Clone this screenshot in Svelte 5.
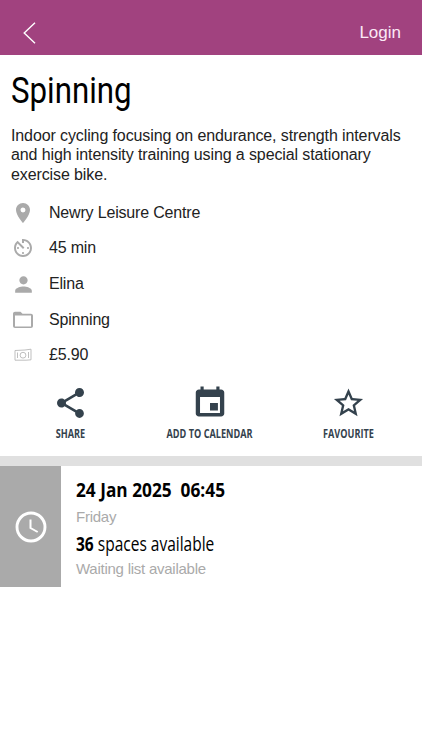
<header class="topbar">
    <button class="back" aria-label="Back">
        <svg width="13" height="22" viewBox="0 0 13 22"><path d="M12 0.7 1.2 11 12 21.3" fill="none" stroke="#fff" stroke-width="1.4" /></svg>
    </button>
    <button class="login">Login</button>
</header>

<main>
    <section class="info">
        <h1><span>{activity.name}</span></h1>
        <p class="description">{activity.description}</p>
        <ul class="details">
            {#each details as detail}
                <li>
                    <span class="icon">
                        {#if detail.icon === 'place'}
                            <svg width="24" height="24" viewBox="0 0 24 24"><path d="M12 2C8.13 2 5 5.13 5 9c0 5.25 7 13 7 13s7-7.75 7-13c0-3.87-3.13-7-7-7zm0 9.5a2.5 2.5 0 0 1 0-5 2.5 2.5 0 0 1 0 5z" /></svg>
                        {:else if detail.icon === 'timer'}
                            <svg width="24" height="24" viewBox="0 0 24 24"><path d="M11 17c0 .55.45 1 1 1s1-.45 1-1-.45-1-1-1-1 .45-1 1zm0-14v4h2V5.080c3.390.49 6 3.390 6 6.920 0 3.870-3.130 7-7 7s-7-3.130-7-7c0-1.680.59-3.220 1.580-4.420L12 13l1.410-1.410-6.800-6.800v.02C4.420 6.450 3 9.050 3 12c0 4.970 4.020 9 9 9 4.970 0 9-4.030 9-9s-4.030-9-9-9h-1zm7 9c0-.55-.45-1-1-1s-1 .45-1 1 .45 1 1 1 1-.45 1-1zM6 12c0 .55.45 1 1 1s1-.45 1-1-.45-1-1-1-1 .45-1 1z" /></svg>
                        {:else if detail.icon === 'person'}
                            <svg width="25" height="25" viewBox="0 0 24 24"><path d="M12 12c2.210 0 4-1.790 4-4s-1.790-4-4-4-4 1.790-4 4 1.790 4 4 4zm0 2c-2.670 0-8 1.340-8 4v2h16v-2c0-2.660-5.330-4-8-4z" /></svg>
                        {:else if detail.icon === 'folder'}
                            <svg width="24" height="24" viewBox="0 0 24 24"><path d="M9.500 3.800H4c-1.100 0-1.990.9-1.990 2L2 18c0 1.100.9 2 2 2h16c1.100 0 2-.9 2-2V7.700c0-1.100-.9-2-2-2h-8.500zM20 18.400H4V7.400h16z" /></svg>
                        {:else}
                            <svg width="18" height="14" viewBox="0 0 18 14" class="money">
                                <path d="M1 2.500 11 2 17 1.200V11.800L12 12.200 1 12.200zM3.500 4.500v5.500M14.500 4v6" />
                                <circle cx="9" cy="7.200" r="2.900" />
                            </svg>
                        {/if}
                    </span>
                    <span>{detail.text}</span>
                </li>
            {/each}
        </ul>
        <div class="actions">
            <button>
                <svg width="37" height="37" viewBox="0 0 24 24"><path d="M18 16.080c-.76 0-1.440.3-1.960.77L8.910 12.700c.05-.23.09-.46.09-.7s-.04-.47-.09-.7l7.050-4.110c.54.5 1.250.81 2.040.81 1.660 0 3-1.340 3-3s-1.340-3-3-3-3 1.340-3 3c0 .24.04.47.09.7L8.040 9.810C7.500 9.310 6.790 9 6 9c-1.660 0-3 1.340-3 3s1.340 3 3 3c.79 0 1.500-.31 2.040-.81l7.120 4.160c-.05.21-.08.43-.08.65 0 1.610 1.310 2.920 2.920 2.920s2.920-1.310 2.920-2.920-1.310-2.920-2.920-2.920z" /></svg>
                <span>SHARE</span>
            </button>
            <button>
                <svg width="38" height="36" viewBox="0 0 24 24" preserveAspectRatio="none"><path d="M17 12h-5v5h5v-5zM16 1v2H8V1H6v2H5c-1.110 0-1.990.9-1.990 2L3 19c0 1.100.89 2 2 2h14c1.100 0 2-.9 2-2V5c0-1.100-.9-2-2-2h-1V1h-2zm2.300 17.700H5.700V8h12.600z" /></svg>
                <span>ADD TO CALENDAR</span>
            </button>
            <button>
                <svg width="35" height="35" viewBox="0 0 24 24"><path d="m22 9.240-7.190-.62L12 2 9.190 8.630 2 9.240l5.460 4.730L5.820 21 12 17.270 18.180 21l-1.630-7.030L22 9.240zM12 15.400l-3.760 2.270 1-4.280-3.320-2.880 4.380-.38L12 6.100l1.710 4.040 4.380.38-3.320 2.880 1 4.280L12 15.400z" /></svg>
                <span>FAVOURITE</span>
            </button>
        </div>
    </section>

    <section class="session">
        <div class="clock">
            <svg width="32" height="32" viewBox="0 0 32 32" fill="none" stroke="#fff"><circle cx="16" cy="16" r="14" stroke-width="2.900" /><path d="M15.500 8.500v8.500l7.200 4" stroke-width="2" /></svg>
        </div>
        <div class="times">
            <div class="date"><span>{session.date}&nbsp; {session.time}</span></div>
            <div class="muted day">{session.day}</div>
            <div class="spaces"><span><b>{session.spaces}</b> spaces available</span></div>
            <div class="muted">Waiting list available</div>
        </div>
    </section>
</main>

<script>
    const activity = {
        name: 'Spinning',
        description: 'Indoor cycling focusing on endurance, strength intervals and high intensity training using a special stationary exercise bike.'
    };

    const details = [
        { icon: 'place', text: 'Newry Leisure Centre' },
        { icon: 'timer', text: '45 min' },
        { icon: 'person', text: 'Elina' },
        { icon: 'folder', text: 'Spinning' },
        { icon: 'money', text: '£5.90' }
    ];

    const session = {
        date: '24 Jan 2025',
        time: '06:45',
        day: 'Friday',
        spaces: 36
    };
</script>

<style>
    :global(body) {
        background: #fff;
        font-family: "Liberation Sans", Arial, sans-serif;
        color: #222;
    }
    button {
        background: none;
        border: none;
        padding: 0;
        font: inherit;
        cursor: pointer;
    }
    svg {
        display: block;
    }
    .topbar {
        display: flex;
        justify-content: space-between;
        align-items: center;
        box-sizing: border-box;
        height: 55px;
        padding: 10px 21px 0 23px;
        background: #a1427f;
    }
    .login {
        color: #fbe9f6;
        font-size: 17px;
    }
    .info {
        box-sizing: border-box;
        height: 411px;
        padding: 14px 11px 0;
        border-bottom: 10px solid #e0e0e0;
    }
    h1 {
        margin: 0;
        height: 57px;
        line-height: 44px;
        font-family: Roboto, sans-serif;
        font-size: 37px;
        font-weight: 400;
        color: #000;
    }
    h1 span, .date span, .spaces span, .actions span {
        display: inline-block;
        white-space: nowrap;
        transform-origin: left center;
        transform: scaleX(0.845);
    }
    .description {
        margin: 0 -4px 0 0;
        font-size: 16px;
        line-height: 19.3px;
        letter-spacing: -0.11px;
    }
    .details {
        list-style: none;
        margin: 11px 0 0;
        padding: 0;
    }
    .details li {
        display: flex;
        align-items: center;
        height: 35.7px;
        font-size: 16px;
        letter-spacing: -0.18px;
    }
    .icon {
        display: flex;
        justify-content: center;
        width: 24px;
        margin-right: 14px;
        fill: #aaa;
    }
    .icon svg {
        flex: none;
    }
    .icon .money {
        fill: none;
        stroke: #b8b8b8;
        stroke-width: 0.9;
    }
    .actions {
        display: grid;
        grid-template-columns: repeat(3, 139px);
        margin: 12px -11px 0 -10px;
    }
    .actions button {
        display: flex;
        flex-direction: column;
        align-items: center;
        color: #34424d;
    }
    .actions svg {
        height: 36px;
        fill: #34424d;
    }
    .actions span {
        margin-top: 5px;
        font-family: "Open Sans", sans-serif;
        font-size: 12px;
        font-weight: 700;
        line-height: 16px;
        transform-origin: center;
        transform: scaleX(0.76);
    }
    .session {
        display: flex;
        height: 121px;
    }
    .clock {
        display: flex;
        align-items: center;
        justify-content: center;
        width: 61px;
        background: #aaa;
    }
    .times {
        padding: 10px 0 0 15px;
    }
    .date, .spaces {
        height: 28px;
        line-height: 28px;
        font-family: "Open Sans", sans-serif;
        font-size: 19.500px;
        color: #000;
    }
    .date {
        font-weight: 700;
    }
    .date span {
        transform: scaleX(0.885);
    }
    .spaces span {
        transform: scaleX(0.795);
    }
    .muted {
        height: 22px;
        line-height: 22px;
        font-size: 15px;
        letter-spacing: -0.25px;
        color: #aaa;
    }
    .day {
        height: 24px;
        line-height: 25px;
        margin-bottom: 2px;
    }
</style>
